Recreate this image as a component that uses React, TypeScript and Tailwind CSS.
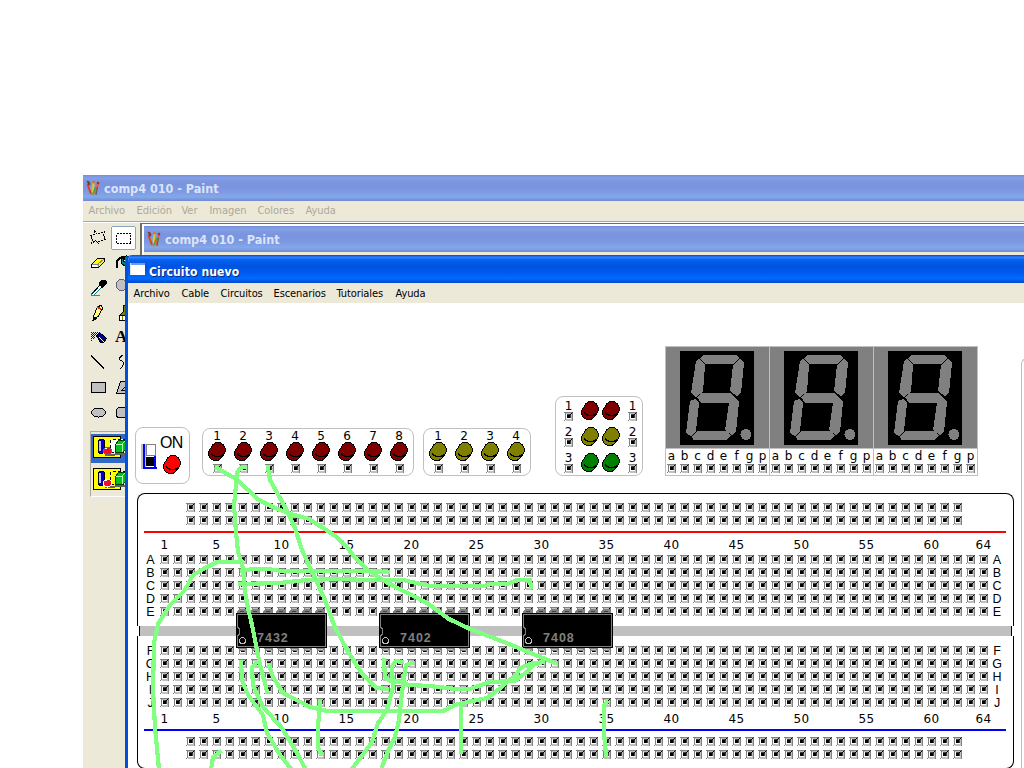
import React from "react";

const letters = ["a", "b", "c", "d", "e", "f", "g", "p"];
const columns = Array.from({ length: 64 }, (_, i) => i + 1);

/* One 9px socket, drawn at x,y of its centre */
function Socket({ x, y }: { x: number; y: number }) {
  return (
    <g transform={`translate(${x - 4} ${y - 4})`}>
      <rect x="1" width="8" height="9" fill="#c0c0c0" />
      <path d="M0 0h9v1H0zM1 1h1v6H1zM8 1h1v8H8z" fill="#808080" />
      <path d="M0 8h1v1H0zM1 7h1v1H1z" fill="#808080" />
      <path d="M2 2h1v5H2zM2 6h5v1H2zM1 8h1v1H1z" fill="#fff" />
      <path d="M3 3h3v3H3zM6 2h1v1H6zM7 1h1v1H7z" fill="#000" />
      <path d="M8 0h1v1H8zM3 2h3v1H3zM6 3h1v3H6z" fill="#404040" />
    </g>
  );
}

function Sockets({ count }: { count: number }) {
  return (
    <svg width={count * 13} height="13" className="block shrink-0" shapeRendering="crispEdges">
      {Array.from({ length: count }, (_, i) => (
        <Socket key={i} x={i * 13 + 6} y={6} />
      ))}
    </svg>
  );
}

function Led({ color }: { color: string }) {
  return (
    <svg width="18" height="20" viewBox="0 0 18 20" className="block shrink-0" shapeRendering="crispEdges">
      <ellipse cx="7.600" cy="11.500" rx="7.600" ry="7.600" fill="#000" />
      <ellipse cx="10" cy="8" rx="7.900" ry="8" fill="#000" />
      <ellipse cx="7.600" cy="11.500" rx="6.600" ry="6.600" fill={color} />
      <ellipse cx="10" cy="8" rx="6.900" ry="7" fill={color} />
      <path d="M3.500 11v1h1v1h2v1h6v-1h2v-1h1" fill="none" stroke="#000" />
    </svg>
  );
}

function LedColumn({ n, color }: { n: number; color: string }) {
  return (
    <div className="flex w-[26px] flex-col items-center">
      <span className="h-[13px] text-[12px] leading-[15px]">{n}</span>
      <Led color={color} />
      <Sockets count={1} />
    </div>
  );
}

function LedRow({ n, color }: { n: number; color: string }) {
  return (
    <div className="flex h-[26px] justify-between">
      <div className="flex w-[13px] flex-col items-center">
        <span className="h-[11px] text-[12px] leading-[14px]">{n}</span>
        <Sockets count={1} />
      </div>
      <div className="flex gap-[3px] pt-[2px]">
        <Led color={color} />
        <Led color={color} />
      </div>
      <div className="flex w-[13px] flex-col items-center">
        <span className="h-[11px] text-[12px] leading-[14px]">{n}</span>
        <Sockets count={1} />
      </div>
    </div>
  );
}

function Digit() {
  return (
    <div className="w-[104px] shrink-0 border-r border-[#c0c0c0]">
      <div className="h-[102px] border-b border-[#c0c0c0] bg-[#808080] pl-[14px] pt-[4px]">
        <svg width="74" height="94" className="block bg-black" shapeRendering="crispEdges" fill="#808080">
          <path d="M20 8l3-4h34l2 3-5 6H25z" />
          <path d="M16 10l3-2 6 6-2 27-7 5-5-4z" />
          <path d="M60 8l4 4-3 30-4 3-7-5 3-26z" />
          <path d="M17 46.500l5-5h28l5 5-5 5H21z" />
          <path d="M15 48l4 4-3 28-5 5-5-3 4-32z" />
          <path d="M55 47l4 4-3 30-4 3-7-5 4-27z" />
          <path d="M12 85l5-5h29l5 4-4 5H13z" />
          <circle cx="66" cy="83.500" r="5.500" />
        </svg>
      </div>
      <div className="-ml-px flex h-[13px]">
        {letters.map((l) => (
          <span key={l} className="w-[13px] shrink-0 text-center text-[12px] leading-[15px]">
            {l}
          </span>
        ))}
      </div>
      <div className="-ml-px">
        <Sockets count={8} />
      </div>
    </div>
  );
}

function NumberRow() {
  return (
    <div className="flex h-[13px] pl-[20px]">
      {columns.map((n) => (
        <span key={n} className="flex w-[13px] shrink-0 justify-center text-[12px] leading-[13px] tracking-[0.4px]">
          {n === 1 || n % 5 === 0 || n === 64 ? n : ""}
        </span>
      ))}
    </div>
  );
}

function BoardRow({ name }: { name: string }) {
  return (
    <div className="flex h-[13px] font-['Liberation_Sans'] text-[12.5px] leading-[13px]">
      <span className="w-[20px] pl-[6px] pr-px pt-px text-center">{name}</span>
      <Sockets count={64} />
      <span className="w-[14px] pt-px text-center">{name}</span>
    </div>
  );
}

function PowerRows() {
  return (
    <div className="pl-[46px]">
      <Sockets count={60} />
      <Sockets count={60} />
    </div>
  );
}

function Breadboard() {
  return (
    <div className="ml-[9px] w-[877px]">
      <div className="h-[133px] rounded-t-[8px] border-x border-t border-black pt-[7px]">
        <PowerRows />
        <div className="ml-[6px] mt-[4px] h-[2px] w-[862px] bg-[#ff0000]" />
        <div className="h-[20px] pt-[6px]">
          <NumberRow />
        </div>
        {["A", "B", "C", "D", "E"].map((r) => (
          <BoardRow key={r} name={r} />
        ))}
      </div>
      <div className="mx-[2px] h-[10px] border-x border-black bg-[#c0c0c0]" />
      <div className="h-[133px] rounded-b-[8px] border-x border-b border-black pt-[8px]">
        {["F", "G", "H", "I", "J"].map((r) => (
          <BoardRow key={r} name={r} />
        ))}
        <div className="mt-[4px]">
          <NumberRow />
        </div>
        <div className="mb-[4px] ml-[6px] mt-[3px] h-[2px] w-[862px] bg-[#0000ff]" />
        <PowerRows />
      </div>
    </div>
  );
}

function Chip({ name, left }: { name: string; left: string }) {
  return (
    <div className={`absolute top-[353px] h-[44px] w-[91px] ${left}`}>
      <svg width="91" height="44" className="block" shapeRendering="crispEdges">
        {Array.from({ length: 7 }, (_, i) => (
          <g key={i} transform={`translate(${i * 13 + 1} 0)`}>
            <path d="M0 5V3l2-2h6l2 2v2z" fill="#808080" />
            <path d="M3 3h4v1H3z" fill="#404040" />
            <path d="M0 40h10l-1 2-2 1H4l-2-1z" fill="#808080" />
            <path d="M3 41h5v1H3z" fill="#c0c0c0" />
          </g>
        ))}
        <rect y="5" width="91" height="35" fill="#000" />
        <path d="M1.500 6.500h88v32h-88v-11h1l1-2v-4l-1-2h-1z" fill="none" stroke="#808080" />
        <circle cx="6.500" cy="32.500" r="3" fill="none" stroke="#c0c0c0" />
      </svg>
      <span className="absolute left-[21px] top-[23px] font-['Liberation_Sans'] text-[12.5px] font-bold leading-[15px] tracking-[1px] text-[#808080]">
        {name}
      </span>
    </div>
  );
}

const wires = [
  "217,468 236,479 259,500 275,508 291,514 309,519 334,535 346,546 356,559 369,571 388,583 427,603 449,619 470,629 504,642 555,663",
  "245,467 240,468 237,473 236,485 234,505 236,532 238,552 243,568 245,592 248,608 252,625 255,640 260,665 267,691",
  "268,467 270,480 285,507 295,528 302,550 315,578 325,600 334,625 347,650 363,675 377,688 387,689",
  "242,562 217,562 205,568 193,575 185,590 170,605 158,624 154,643 153,690 155,727 159,770",
  "242,571 252,569 268,569 282,571 370,571 388,572",
  "240,584 280,583 307,580 337,579 370,580 403,580 430,586 483,586 492,584 507,584 517,580 530,580 531,587",
  "241,662 242,680 248,695 263,715 267,733 280,755 292,770",
  "256,663 252,668 253,685 263,707 282,728 297,753 306,770",
  "269,665 273,677 283,693 310,707 327,711 443,711 458,704 487,698 498,690 507,682 516,675 520,668 530,664 543,662",
  "384,660 385,677 390,681 402,682 408,685 430,686 455,689 470,689 490,682 515,681 527,672 533,665 543,662",
  "402,662 396,661 392,666 393,687 387,710 378,723 372,742 352,769",
  "412,663 406,665 402,693 399,720 395,737 387,753 381,770",
  "320,702 318,727 318,747 321,754",
  "220,752 213,757 211,770",
  "461,705 461,752",
  "607,702 604,706 604,733 606,755",
];

function PaintLogo() {
  return (
    <svg width="14" height="16" viewBox="0 0 14 16" className="block shrink-0">
      <path d="M2 7l10.500 0-1.500 8.500H5z" fill="#8fa9b5" />
      <path d="M5 14L1.500 4" stroke="#e83a20" strokeWidth="2" />
      <path d="M0.500 0.500l3 1 1 3-2 1z" fill="#7a3a30" />
      <path d="M7 14L7.500 2" stroke="#e0cc30" strokeWidth="2" />
      <path d="M9 14l3-10" stroke="#f05a30" strokeWidth="2.200" />
      <path d="M6.500 15l3-8" stroke="#35a050" strokeWidth="1.300" />
      <path d="M11.500 7l-1.500 8" stroke="#50606c" strokeWidth="1.200" />
      <circle cx="7.500" cy="2" r="1.500" fill="#d87820" />
      <circle cx="12" cy="3" r="1.300" fill="#a83222" />
    </svg>
  );
}

function ToolIcon({ n }: { n: number }) {
  return (
    <svg width="25" height="25" viewBox="0 0 25 25" className="block" shapeRendering="crispEdges" fill="none" stroke="#000">
      {n === 0 && <path d="M8.500 5.500l3 4 2-1 5-2-1 4 2 4-4 1-3 1 0 2-3-3-4 3 1-4-2-4 4-1z" strokeDasharray="2 1" />}
      {n === 1 && (
        <>
          <rect x="0.500" y="1.500" width="24" height="23" rx="2" fill="#fff" stroke="#8ba5bd" />
          <rect x="5.500" y="8.500" width="14" height="10" strokeDasharray="2 1" />
        </>
      )}
      {n === 2 && (
        <>
          <path d="M5.500 14.500l6-6h7v3l-6 6h-7z" fill="#ffff00" />
          <path d="M6 14h6l6-5M12 14v3" stroke="#808080" />
          <path d="M6 15h5v2H6z" fill="#fff" stroke="none" />
        </>
      )}
      {n === 3 && (
        <>
          <path d="M10.500 9.500l5-4 8 6-6 7-7-5z" fill="#008080" />
          <path d="M5.500 18v-6l3-4 4-1v5" strokeWidth="2" />
          <path d="M12 10h8l-3 3z" fill="#fff" stroke="none" />
        </>
      )}
      {n === 4 && (
        <>
          <path d="M5 19l9-9 2 2-8 8H5z" fill="#fff" stroke="#008080" />
          <path d="M6 19l8-9" />
          <path d="M13 8l3-3 4 1v3l-4 4z" fill="#000" />
          <path d="M5 20h9" stroke="#00a0b8" />
        </>
      )}
      {n === 5 && (
        <>
          <circle cx="10.500" cy="10" r="5.500" fill="#c0c0c0" stroke="#606080" />
          <path d="M15 15l5 4" stroke="#0000a0" strokeWidth="2" />
        </>
      )}
      {n === 6 && (
        <>
          <path d="M7.500 16.500l4-10 4-1 1 3-5 9-4 3z" fill="#ffff80" />
          <path d="M11 7l4 2" stroke="#e02020" strokeWidth="2" />
          <path d="M7 20l1-3 3 1z" fill="#000" />
        </>
      )}
      {n === 7 && (
        <>
          <path d="M12.500 11.500v-6h4v6l3 4v5h-11v-5z" fill="#808000" />
          <path d="M8.500 15.500h11v5h-11z" fill="#fff" />
          <path d="M11 16v4M14 16v4" stroke="#808000" />
        </>
      )}
      {n === 8 && (
        <>
          <path d="M5 7.500h8M5 9.500h5M5 11.500h4M5 13.500h3M5 15.500h2" stroke="#0000c0" strokeDasharray="1 1" />
          <path d="M6 8.500h6M6 10.500h4M6 12.500h3" stroke="#0000c0" strokeDasharray="1 1" />
          <path d="M10.500 10.500l3-3 7 6-3 4-3 0z" fill="#000090" />
          <path d="M13 12l5 5" stroke="#fff" />
        </>
      )}
      {n === 10 && <path d="M5 6l13 12" strokeWidth="1.500" />}
      {n === 11 && <path d="M12 5c-5 3-4 5-1 6s1 6-2 8" />}
      {n === 12 && <rect x="5.500" y="7.500" width="14" height="10" fill="#c0c0c0" />}
      {n === 13 && <path d="M5.500 18.500l4-12h10v12z M11 15l5-5v5z" fill="#c0c0c0" />}
      {n === 14 && <ellipse cx="12.500" cy="12.500" rx="7" ry="4.500" fill="#c0c0c0" />}
      {n === 15 && <rect x="5.500" y="7.500" width="15" height="10" rx="3" fill="#c0c0c0" />}
    </svg>
  );
}

function ModeIcon({ opaque }: { opaque: boolean }) {
  return (
    <svg width="36" height="26" viewBox="0 0 36 26" className="block" shapeRendering="crispEdges">
      <rect x="2.500" y="2.500" width="27" height="21" fill="#ffff00" stroke="#000" />
      {opaque && <rect x="19" y="5" width="17" height="14" fill="#fff" />}
      <path d="M19.500 18.500v-13H36M19.500 18.500H36" fill="none" stroke="#000" strokeDasharray="3 2" />
      <path d="M7.500 6.500l2-1h3l1 1v11l-2 2h-3l-1-2z" fill="#0000d0" stroke="#000" />
      <path d="M9 7v10" stroke="#c0c0ff" strokeWidth="1.500" />
      <path d="M14 21h10M24 20h10" stroke="#606060" strokeWidth="2" />
      <circle cx="16.500" cy="17" r="4" fill="#f01020" stroke={opaque ? "#6060a0" : "#fff"} />
      <path d="M14 15l2-1" stroke="#fff" />
      <path d="M24.500 10.500l3-4h7v9l-3 3h-7z" fill="#00c020" stroke="#004000" />
      <path d="M25 10h6l3-3M31 10v8" stroke="#b0ffb0" fill="none" />
    </svg>
  );
}

function Toolbox() {
  return (
    <div className="w-[57px] shrink-0 pl-[3px] pt-[2px]">
      <div className="grid w-[50px] grid-cols-[25px_25px]">
        {Array.from({ length: 16 }, (_, i) =>
          i === 9 ? (
            <span key={i} className="h-[25px] pl-[4px] font-['Liberation_Serif'] text-[17px] font-bold leading-[24px]">
              A
            </span>
          ) : (
            <ToolIcon key={i} n={i} />
          ),
        )}
      </div>
      <div className="ml-[4px] mt-[6px] h-[66px] w-[41px] border border-b-white border-l-[#aca899] border-r-white border-t-[#aca899] pt-[2px]">
        <div className="h-[29px] bg-[#316ac5]">
          <ModeIcon opaque />
        </div>
        <div className="pt-[3px]">
          <ModeIcon opaque={false} />
        </div>
      </div>
    </div>
  );
}

function CircuitWindow() {
  const menus = [
    ["Archivo", "w-[48px]"],
    ["Cable", "w-[39px]"],
    ["Circuitos", "w-[53px]"],
    ["Escenarios", "w-[63px]"],
    ["Tutoriales", "w-[59px]"],
    ["Ayuda", "w-[40px]"],
  ];
  return (
    <div className="absolute left-[125px] top-[255px] h-[513px] w-[899px] overflow-hidden rounded-tl-[7px] border-l-[3px] border-[#0051d8] bg-white">
      <div className="flex h-[28px] items-center bg-[linear-gradient(180deg,#0a46b8_0%,#2b83ff_8%,#0660ef_18%,#0054e3_38%,#0058eb_60%,#006aff_85%,#0048ca_100%)] pl-[2px] pt-[5px]">
        <svg width="15" height="12" className="mb-[5px] block" shapeRendering="crispEdges">
          <rect width="15" height="12" fill="#fff" />
          <path d="M0 0h15v2H0z" fill="#6b9cf0" />
          <path d="M0 0h1v12H0z" fill="#d8e4f8" />
        </svg>
        <span className="ml-[4px] text-[12px] font-bold leading-[20px] tracking-[0.15px] text-white [text-shadow:1px_1px_0_#0a2a80] font-['DejaVu_Sans_Condensed','DejaVu_Sans',sans-serif]">
          Circuito nuevo
        </span>
      </div>
      <div className="flex h-[20px] bg-[#ece9d8] pl-[5.5px] pt-px text-[11px] leading-[20px]">
        {menus.map(([m, w]) => (
          <span key={m} className={`${w} shrink-0 whitespace-nowrap font-['DejaVu_Sans_Condensed','DejaVu_Sans',sans-serif] tracking-[-0.1px]`}>
            {m}
          </span>
        ))}
      </div>
      <div className="flex h-[190px] items-start pl-[7px] font-['DejaVu_Sans',sans-serif]">
        <div className="mt-[124px] flex h-[57px] w-[55px] shrink-0 rounded-[8px] border border-[#c0c0c0] pl-[5px]">
          <svg width="18" height="34" className="mt-[14px] block shrink-0" shapeRendering="crispEdges">
            <path d="M0 2h5v25H0z" fill="#c0c0c0" />
            <path d="M2 2h2v25H2zM2 25h14v2H2zM13 14h2v13h-2z" fill="#0000ff" />
            <rect x="5.500" y="2.500" width="9" height="11" fill="#fff" stroke="#808080" />
            <rect x="5" y="15" width="8" height="9" fill="#000" />
          </svg>
          <div className="pt-[5px]">
            <div className="h-[22px] pl-px font-['Liberation_Sans'] text-[16px] leading-[20px] tracking-[-0.6px]">ON</div>
            <div className="pl-[4px]">
              <Led color="#ff0000" />
            </div>
          </div>
        </div>
        <div className="ml-[12px] mt-[125px] flex h-[48px] w-[212px] shrink-0 rounded-[8px] border border-[#c0c0c0] pl-px">
          {[1, 2, 3, 4, 5, 6, 7, 8].map((n) => (
            <LedColumn key={n} n={n} color="#800000" />
          ))}
        </div>
        <div className="ml-[9px] mt-[125px] flex h-[48px] w-[108px] shrink-0 rounded-[8px] border border-[#c0c0c0] pl-px">
          {[1, 2, 3, 4].map((n) => (
            <LedColumn key={n} n={n} color="#808000" />
          ))}
        </div>
        <div className="ml-[24px] mt-[93px] h-[80px] w-[88px] shrink-0 rounded-[8px] border border-[#c0c0c0] pl-[6px] pr-[3px] pt-[2px]">
          <LedRow n={1} color="#800000" />
          <LedRow n={2} color="#808000" />
          <LedRow n={3} color="#008000" />
        </div>
        <div className="ml-[22px] mt-[43px] flex h-[130px] w-[313px] shrink-0 border-b border-l border-t border-[#c0c0c0]">
          <Digit />
          <Digit />
          <Digit />
        </div>
        <div className="ml-[43px] mt-[55px] h-[500px] w-[40px] shrink-0 rounded-tl-[6px] border-l border-t border-[#c0c0c0]" />
      </div>
      <div className="font-['DejaVu_Sans',sans-serif]">
        <Breadboard />
      </div>
      <Chip name="7432" left="left-[108px]" />
      <Chip name="7402" left="left-[251px]" />
      <Chip name="7408" left="left-[394px]" />
      <svg width="896" height="513" viewBox="128 255 896 513" className="absolute left-0 top-0" shapeRendering="crispEdges">
        {wires.map((w) => (
          <polyline key={w} points={w} fill="none" stroke="#80ff80" strokeWidth="4.200" strokeLinejoin="round" strokeLinecap="square" />
        ))}
      </svg>
    </div>
  );
}

function PaintTitle() {
  return (
    <div className="flex h-[26px] items-center bg-[linear-gradient(180deg,#7590dc_0%,#86a0e6_12%,#7a94de_30%,#7c98e2_60%,#84a8ea_85%,#7088d4_100%)] pl-[3px]">
      <PaintLogo />
      <span className="ml-[4px] pt-[2px] text-[12.5px] font-bold leading-[20px] text-[#dbe4f8] font-['DejaVu_Sans_Condensed','DejaVu_Sans',sans-serif]">
        comp4 010 - Paint
      </span>
    </div>
  );
}

export default function App() {
  const menus = [
    ["Archivo", "w-[48px]"],
    ["Edición", "w-[45px]"],
    ["Ver", "w-[28px]"],
    ["Imagen", "w-[48px]"],
    ["Colores", "w-[48px]"],
    ["Ayuda", "w-[40px]"],
  ];
  return (
    <div className="relative h-[768px] w-[1024px] overflow-hidden bg-white pl-[83px] pt-[175px] text-black">
      <div className="h-[593px] bg-[#ece9d8]">
        <PaintTitle />
        <div className="flex h-[20px] pl-[5.5px] text-[11px] leading-[19px] text-[#aca899]">
          {menus.map(([m, w]) => (
            <span key={m} className={`${w} shrink-0 whitespace-nowrap font-['DejaVu_Sans_Condensed','DejaVu_Sans',sans-serif] tracking-[-0.05px]`}>
              {m}
            </span>
          ))}
        </div>
        <div className="flex h-[547px] border-t border-[#aca899]">
          <div className="flex flex-1 border-t border-white">
            <Toolbox />
            <div className="h-full flex-1 border-l-2 border-t border-[#716f64] bg-white pl-[2px] pt-[2px]">
              <PaintTitle />
              <div className="h-[300px] bg-[#ece9d8]" />
            </div>
          </div>
        </div>
      </div>
      <CircuitWindow />
    </div>
  );
}
